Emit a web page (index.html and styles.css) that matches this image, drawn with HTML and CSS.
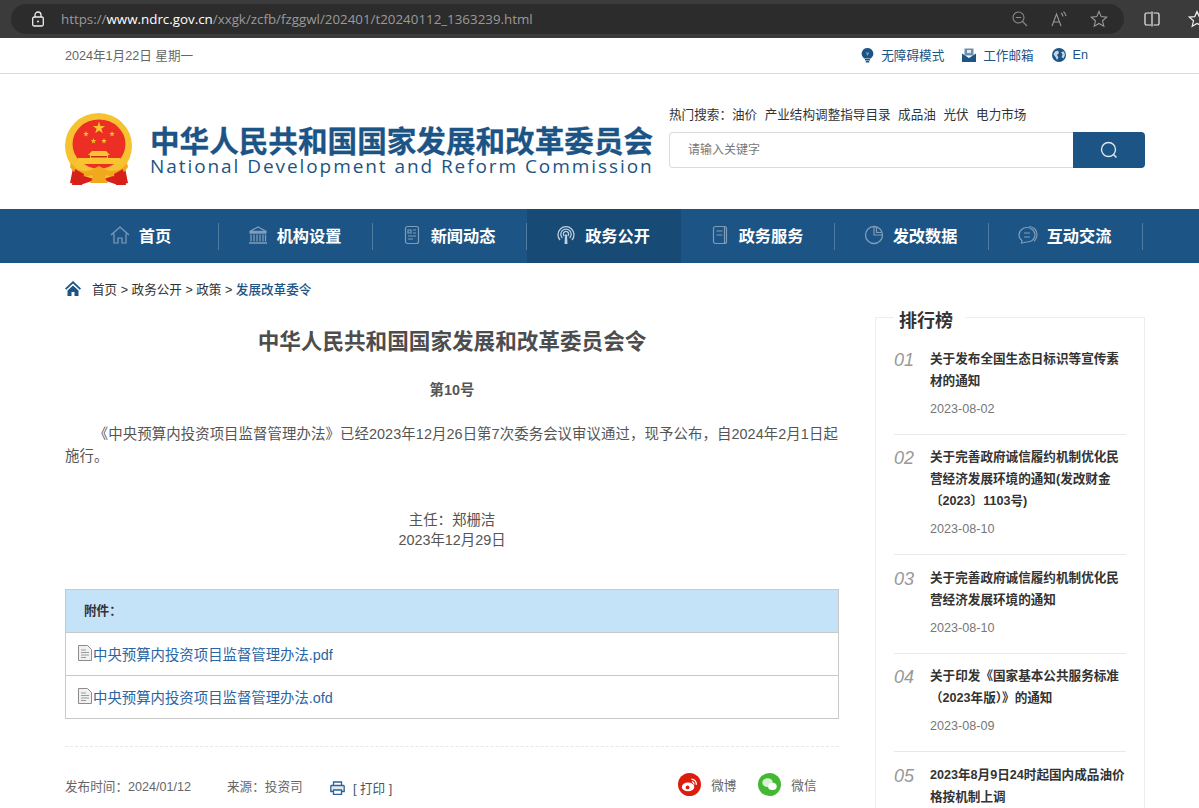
FILE: index.html
```html
<!DOCTYPE html>
<html lang="zh-CN">
<head>
<meta charset="utf-8">
<title>中华人民共和国国家发展和改革委员会令</title>
<link rel="stylesheet" href="styles.css">
</head>
<body>
<div class="chrome">
  <div class="address">
    <svg class="lock" viewBox="0 0 14 16" width="14" height="16"><path d="M4 6V4a3 3 0 0 1 6 0v2" fill="none" stroke="#eee" stroke-width="1.3"/><rect x="1.700" y="6" width="10.600" height="9" rx="1.500" fill="none" stroke="#eee" stroke-width="1.3"/><circle cx="7" cy="10.500" r="1" fill="#eee"/></svg>
    <div class="url"><span class="url-dim">https://</span><span class="url-host">www.ndrc.gov.cn</span><span class="url-dim">/xxgk/zcfb/fzggwl/202401/t20240112_1363239.html</span></div>
    <div class="address-tools">
      <svg viewBox="0 0 16 16" width="16" height="16"><circle cx="6.500" cy="6.500" r="5.500" fill="none" stroke="#8a8a8a" stroke-width="1.100"/><path d="M3.800 6.500h5.400M10.500 10.500l4.500 4.500" stroke="#8a8a8a" stroke-width="1.100" fill="none"/></svg>
      <svg viewBox="0 0 16 16" width="16" height="16"><path d="M1 15 5.500 3 10 15M2.800 11h5.400M10 2a5 5 0 0 1 2 3.500M12.500 .8a7 7 0 0 1 2.500 4.400" fill="none" stroke="#9a9a9a" stroke-width="1.100"/></svg>
      <svg viewBox="0 0 18 18" width="18" height="18"><path d="M9 1.500 11.200 6.600 16.700 7.100 12.500 10.800 13.800 16.200 9 13.400 4.200 16.200 5.500 10.800 1.300 7.100 6.800 6.600Z" fill="none" stroke="#9a9a9a" stroke-width="1.100"/></svg>
    </div>
  </div>
  <div class="chrome-tools">
    <svg viewBox="0 0 16 16" width="16" height="16"><path d="M7 2H2.500A1.500 1.500 0 0 0 1 3.500v9A1.500 1.500 0 0 0 2.500 14H7M9.500 2h4A1.500 1.500 0 0 1 15 3.500v9a1.500 1.500 0 0 1-1.500 1.500h-4M8 .5v15" fill="none" stroke="#eee" stroke-width="1.200"/></svg>
    <svg viewBox="0 0 18 18" width="18" height="18"><path d="M9 1.500 11.200 6.600 16.700 7.100 12.500 10.800 13.800 16.200 9 13.400 4.200 16.200 5.500 10.800 1.300 7.100 6.800 6.600Z" fill="none" stroke="#eee" stroke-width="1.200"/></svg>
  </div>
</div>

<div class="topbar">
  <div class="wrap topbar-in">
    <div class="today">2024年1月22日 星期一</div>
    <div class="top-links">
      <a class="top-link"><svg viewBox="0 0 13 16" width="13" height="16"><path d="M6.500 1a5.800 5.800 0 0 0-3.400 10.500h6.800A5.800 5.800 0 0 0 6.500 1Z" fill="#1c5485"/><path d="M4.700 5.500h3.600L6.500 9Z" fill="#7fa0bd"/><path d="M4 12.800h5M4.800 14.800h3.400" stroke="#1c5485" stroke-width="1.500"/></svg>无障碍模式</a>
      <a class="top-link"><svg viewBox="0 0 14 14" width="14" height="14"><rect x="2.500" y="0.500" width="9" height="7" fill="#6d8fad"/><rect x="5" y="2" width="4" height="3" fill="#dfe7ee"/><path d="M0 5.500 7 10 14 5.500V14H0Z" fill="#1c5485"/></svg>工作邮箱</a>
      <a class="top-link"><svg viewBox="0 0 14 14" width="14" height="14"><circle cx="7" cy="7" r="7" fill="#1c5485"/><path d="M3 3.500 6 2.500 7 5 5 7 6.500 9.500 5 12 3.500 9 1.500 6.500ZM9 4l3-.5 1 3.500-1.500 3.500L9.500 9 10.500 6.500Z" fill="#c5d5e2"/></svg>En</a>
    </div>
  </div>
</div>

<header class="wrap masthead">
  <div class="brand">
    <svg class="emblem" viewBox="0 0 68 73" width="68" height="73">
      <defs><path id="star" d="M0-1 .225-.309H.951L.363.118.588.809 0 .382-.588.809-.363.118-.951-.309H-.225Z"/></defs>
      <path d="M9 50 5 70l10 2 12-4h14l12 4 10-2-4-20Z" fill="#d8201b"/>
      <ellipse cx="33.500" cy="33" rx="33.500" ry="33" fill="#f6c232"/>
      <ellipse cx="34" cy="31" rx="26.500" ry="24.500" fill="#ec2e25"/>
      <g fill="#f8c42f">
        <use href="#star" transform="translate(34 15) scale(6.500)"/>
        <use href="#star" transform="translate(21 21) scale(3)"/>
        <use href="#star" transform="translate(47 21) scale(3)"/>
        <use href="#star" transform="translate(28.500 28) scale(3)"/>
        <use href="#star" transform="translate(39 28) scale(3)"/>
        <path d="M27 38h14l4 4H23ZM25 42h18v3H25ZM13 45h42l2 6H11Z"/>
      </g>
      <path d="M26 43h16v1.500H26Z" fill="#c9281f"/>
      <path d="M6 50c6 8 13 9 20 7l8-4 8 4c7 2 14 1 20-7l1 4c-6 9-14 11-22 8l-1 3 3 5H25l3-5-1-3c-8 3-16 1-22-8Z" fill="#f0a81c"/>
      <path d="M10 56l9 5-2 11H7ZM58 56l-9 5 2 11h10Z" fill="#d8201b"/>
    </svg>
    <div class="brand-text">
      <div class="brand-cn">中华人民共和国国家发展和改革委员会</div>
      <div class="brand-en">National Development and Reform Commission</div>
    </div>
  </div>
  <div class="search">
    <div class="hot"><span>热门搜索&#xFF1A;</span><a>油价</a><a>产业结构调整指导目录</a><a>成品油</a><a>光伏</a><a>电力市场</a></div>
    <div class="search-box">
      <div class="search-input">请输入关键字</div>
      <div class="search-btn"><svg viewBox="0 0 18 18" width="18" height="18"><circle cx="8.500" cy="8.500" r="7" fill="none" stroke="#dfe8ef" stroke-width="1.400"/><path d="M13.500 13.500l3 3" stroke="#dfe8ef" stroke-width="1.500"/></svg></div>
    </div>
  </div>
</header>

<nav class="nav">
  <div class="wrap nav-in">
    <a class="nav-item"><span class="nav-cell"><svg viewBox="0 0 20 20" width="20" height="20"><path d="M1 10 10 2l9 8M4 8.500V18h4v-5h4v5h4V8.500" fill="none" stroke="#7f9db8" stroke-width="1.200"/></svg>首页</span></a>
    <a class="nav-item"><span class="nav-cell"><svg viewBox="0 0 20 20" width="20" height="20"><path d="M1.500 6.500 10 2l8.500 4.500ZM1.500 8h17M3 9.500v7M6 9.500v7M9 9.500v7M12 9.500v7M15 9.500v7M17.500 9.500v7M1 18h18" fill="none" stroke="#7f9db8" stroke-width="1.300"/></svg>机构设置</span></a>
    <a class="nav-item"><span class="nav-cell"><svg viewBox="0 0 20 20" width="20" height="20"><rect x="3.500" y="1.500" width="13" height="17" rx="2" fill="none" stroke="#7f9db8" stroke-width="1.200"/><path d="M6 5h3v3H6ZM11 5h3M11 8h3M6 11h8M6 14h5" fill="none" stroke="#7f9db8" stroke-width="1.200"/></svg>新闻动态</span></a>
    <a class="nav-item is-active"><span class="nav-cell"><svg viewBox="0 0 20 20" width="20" height="20"><path d="M4 15a8 8 0 1 1 12 0M6.300 13a5.200 5.200 0 1 1 7.400 0M8.300 11a2.600 2.600 0 1 1 3.400 0" fill="none" stroke="#c0d0de" stroke-width="1.300"/><path d="M9 9.500h2l.5 9.500h-3Z" fill="#c0d0de"/></svg>政务公开</span></a>
    <a class="nav-item"><span class="nav-cell"><svg viewBox="0 0 20 20" width="20" height="20"><rect x="3.500" y="1.500" width="13" height="17" rx="2" fill="none" stroke="#7f9db8" stroke-width="1.200"/><path d="M6.500 6h6M6.500 10h6M14.500 2v16" fill="none" stroke="#7f9db8" stroke-width="1.200"/></svg>政务服务</span></a>
    <a class="nav-item"><span class="nav-cell"><svg viewBox="0 0 20 20" width="20" height="20"><circle cx="10" cy="10" r="8.500" fill="none" stroke="#7f9db8" stroke-width="1.300"/><path d="M10 1.500V10h8.500M12.500 2v5.500H18" fill="none" stroke="#7f9db8" stroke-width="1.200"/></svg>发改数据</span></a>
    <a class="nav-item"><span class="nav-cell"><svg viewBox="0 0 20 20" width="20" height="20"><path d="M9 2.500a8 7.500 0 0 1 8 7.500c0 4-3.500 7-8 7-1 0-2 0-3 .5L3.500 18l.5-2.500A7 7 0 0 1 1 10a8 7.500 0 0 1 8-7.500Z" fill="none" stroke="#7f9db8" stroke-width="1.200"/><path d="M11 1.500c5 0 8 4 8 8s-1.500 5.500-3 7M6 8h6M6 12h6" fill="none" stroke="#7f9db8" stroke-width="1.200"/></svg>互动交流</span></a>
  </div>
</nav>

<div class="wrap crumbs">
  <svg viewBox="0 0 16 16" width="16" height="16"><path d="M8 1 0 8.500l1.200 1.200L8 3.500l6.800 6.200L16 8.500Z" fill="#1c5485"/><path d="M2.500 10.500 8 5.500l5.500 5V16H9.500v-4h-3v4h-4Z" fill="#1c5485"/></svg>
  <div class="crumb-text">首页 &gt; 政务公开 &gt; 政策 &gt; <b>发展改革委令</b></div>
</div>

<main class="wrap content">
  <article class="article">
    <h1>中华人民共和国国家发展和改革委员会令</h1>
    <div class="doc-no">第10号</div>
    <p class="body-text">《中央预算内投资项目监督管理办法》已经2023年12月26日第7次委务会议审议通过&#xFF0C;现予公布&#xFF0C;自2024年2月1日起施行。</p>
    <div class="sign">
      <div>主任&#xFF1A;郑栅洁</div>
      <div>2023年12月29日</div>
    </div>
    <div class="attach">
      <div class="attach-head">附件&#xFF1A;</div>
      <a class="attach-row"><svg viewBox="0 0 14 16" width="14" height="16"><path d="M.5.500h9l4 4v11H.5Z" fill="#f1f1f1" stroke="#8c8c8c"/><path d="M3 5h5M3 7.500h8M3 10h8M3 12.500h5" stroke="#9a9a9a"/></svg>中央预算内投资项目监督管理办法.pdf</a>
      <a class="attach-row"><svg viewBox="0 0 14 16" width="14" height="16"><path d="M.5.500h9l4 4v11H.5Z" fill="#f1f1f1" stroke="#8c8c8c"/><path d="M3 5h5M3 7.500h8M3 10h8M3 12.500h5" stroke="#9a9a9a"/></svg>中央预算内投资项目监督管理办法.ofd</a>
    </div>
    <div class="meta">
      <span class="meta-date">发布时间&#xFF1A;2024/01/12</span>
      <span class="meta-src">来源&#xFF1A;投资司</span>
      <a class="meta-print"><svg viewBox="0 0 15 14" width="15" height="14"><path d="M3.500 4.500V1h8v3.500" fill="none" stroke="#2a6496" stroke-width="1.300"/><path d="M3.500 10.500H.8V5.200a.7.7 0 0 1 .7-.7h12a.7.7 0 0 1 .7.7v5.300h-2.700" fill="#e3ebf2" stroke="#2a6496" stroke-width="1.300"/><path d="M3.500 9h8v4.400h-8Z" fill="#fff" stroke="#2a6496" stroke-width="1.300"/></svg>[ 打印 ]</a>
      <span class="share">
        <a class="share-item"><svg viewBox="0 0 24 24" width="23" height="23"><circle cx="12" cy="12" r="12" fill="#dc1c0c"/><ellipse cx="10.500" cy="14.500" rx="6.500" ry="4.500" fill="#fff"/><circle cx="10" cy="15" r="2" fill="#dc1c0c"/><path d="M14 6.500a5 5 0 0 1 5 6M14.500 9a2.500 2.500 0 0 1 2 3" fill="none" stroke="#fff" stroke-width="1.300"/></svg>微博</a>
        <a class="share-item"><svg viewBox="0 0 24 24" width="23" height="23"><circle cx="12" cy="12" r="12" fill="#44b833"/><ellipse cx="10" cy="10" rx="5.500" ry="4.500" fill="#d9f2d5"/><ellipse cx="15" cy="14" rx="4.500" ry="3.700" fill="#fff"/></svg>微信</a>
      </span>
    </div>
  </article>

  <aside class="rank">
    <h2>排行榜</h2>
    <ul class="rank-list">
      <li class="rank-item"><span class="rank-no">01</span><div><a class="rank-title">关于发布全国生态日标识等宣传素材的通知</a><div class="rank-date">2023-08-02</div></div></li>
      <li class="rank-item"><span class="rank-no">02</span><div><a class="rank-title">关于完善政府诚信履约机制优化民营经济发展环境的通知(发改财金〔2023〕1103号)</a><div class="rank-date">2023-08-10</div></div></li>
      <li class="rank-item"><span class="rank-no">03</span><div><a class="rank-title">关于完善政府诚信履约机制优化民营经济发展环境的通知</a><div class="rank-date">2023-08-10</div></div></li>
      <li class="rank-item"><span class="rank-no">04</span><div><a class="rank-title">关于印发《国家基本公共服务标准&#xFF08;2023年版&#xFF09;》的通知</a><div class="rank-date">2023-08-09</div></div></li>
      <li class="rank-item"><span class="rank-no">05</span><div><a class="rank-title">2023年8月9日24时起国内成品油价格按机制上调</a></div></li>
    </ul>
  </aside>
</main>
</body>
</html>
```

FILE: styles.css
```css
* { box-sizing: border-box; }
html, body { height: 808px; overflow: hidden; }
body {
  margin: 0;
  background: #fff;
  color: #333;
  font-family: "Liberation Sans", "Noto Sans CJK SC", sans-serif;
  font-size: 12.600px;
}
a { color: inherit; text-decoration: none; }
svg { display: block; flex: none; }
.wrap { width: 1080px; margin-left: 65px; }

/* browser chrome */
.chrome { display: flex; align-items: center; height: 38px; padding-left: 11px; background: #3b3b3b; overflow: hidden; }
.address { display: flex; flex: none; align-items: center; width: 1113px; height: 30px; padding: 0 16px 0 20px; border-radius: 15px; background: #2c2c2c; }
.url { margin-left: 16px; font-family: "Open Sans", sans-serif; font-size: 13.350px; color: #9a9a9a; white-space: nowrap; }
.url-host { color: #fff; }
.address-tools { display: flex; align-items: center; gap: 23px; margin-left: auto; }
.chrome-tools { display: flex; flex: none; align-items: center; gap: 28px; margin-left: 20px; }

/* top strip */
.topbar { height: 36px; border-bottom: 1px solid #d5dde3; }
.topbar-in { display: flex; align-items: center; justify-content: space-between; height: 33px; }
.today { color: #666; }
.top-links { display: flex; gap: 18px; margin-right: 57px; color: #1c5485; }
.top-link { display: flex; align-items: center; gap: 7px; }

/* masthead */
.masthead { display: flex; justify-content: space-between; height: 135px; }
.brand { display: flex; align-items: flex-start; padding-top: 39px; }
.brand-text { margin-left: 17px; padding-top: 16px; color: #1c5485; }
.brand-cn { font-size: 29.600px; line-height: 26px; font-weight: 700; white-space: nowrap; -webkit-text-stroke: 0.3px #1c5485; }
.brand-en { font-family: "Open Sans", sans-serif; font-size: 19px; line-height: 22px; letter-spacing: 1.930px; white-space: nowrap; }
.search { width: 476px; padding-top: 32px; }
.hot { display: flex; gap: 7.500px; height: 26px; line-height: 18px; color: #333; }
.hot span { margin-right: -7.500px; }
.search-box { display: flex; height: 36px; }
.search-input { flex: 1; padding-left: 18px; line-height: 34px; border: 1px solid #dcdcdc; border-right: 0; border-radius: 4px 0 0 4px; font-size: 12px; color: #777; }
.search-btn { display: flex; align-items: center; justify-content: center; width: 72px; background: #1c5485; border-radius: 0 4px 4px 0; }

/* nav */
.nav { height: 54px; background: #1c5485; }
.nav-in { display: flex; height: 54px; }
.nav-item { display: flex; align-items: center; width: 154px; color: #fff; font-size: 16.200px; font-weight: 700; }
.nav-cell { display: flex; align-items: center; justify-content: center; gap: 9px; width: 100%; height: 27px; padding: 0 2px 2px 0; border-right: 1px solid #4f7ba1; }
.is-active { background: #184a76; }
.is-active .nav-cell { border-right: 0; }

/* breadcrumb */
.crumbs { display: flex; align-items: center; gap: 11px; height: 50px; }
.crumb-text { color: #333; }
.crumb-text b { color: #1c5485; font-weight: 500; }

/* content */
.content { display: flex; justify-content: space-between; align-items: flex-start; }
.article { width: 774px; }
.article h1 { margin: 14px 0 0; text-align: center; font-size: 21.600px; line-height: 30px; font-weight: 700; color: #4d4d4d; }
.doc-no { margin-top: 23px; text-align: center; font-size: 14.400px; font-weight: 700; line-height: 20px; color: #555; }
.body-text { margin: 23px 0 0; text-indent: 28.800px; font-size: 14.400px; line-height: 22px; letter-spacing: 0.090px; color: #555; }
.sign { margin-top: 43px; text-align: center; font-size: 14.400px; line-height: 20px; color: #555; }
.attach { margin-top: 39px; border: 1px solid #c9c9c9; }
.attach-head { height: 43px; padding-left: 18px; line-height: 42px; font-weight: 700; background: #c5e3f8; color: #333; border-bottom: 1px solid #c9c9c9; }
.attach-row { display: flex; align-items: center; gap: 1px; height: 42px; padding: 0 0 2px 12px; font-size: 14.400px; color: #2a66a3; }
.attach-row + .attach-row { height: 43px; border-top: 1px solid #c9c9c9; }
.meta { display: flex; align-items: center; margin-top: 27px; padding-top: 26px; border-top: 1px dashed #e8e8e8; color: #666; }
.meta-date { width: 162px; }
.meta-src { width: 103px; }
.meta-print { display: flex; align-items: center; gap: 8px; margin-top: 4px; color: #44576a; }
.share { display: flex; gap: 22px; margin: 0 22.500px 2px auto; }
.share-item { display: flex; align-items: center; gap: 10px; }

/* rank */
.rank { width: 270px; height: 600px; margin-top: 4px; padding: 0 18px; border: 1px solid #eee; }
.rank h2 { width: fit-content; margin: -11px 0 0 0; padding: 0 12px 0 5px; font-size: 18px; line-height: 28px; font-weight: 700; color: #333; background: #fff; }
.rank-list { list-style: none; margin: 0; padding: 0; }
.rank-item { display: flex; gap: 16px; padding: 11.500px 0 14px; border-bottom: 1px solid #e8e8e8; }
.rank-item:first-child { padding: 13px 0 13.500px; }
.rank-no { flex: none; width: 20px; padding-top: 1px; font-size: 18px; line-height: 22px; font-style: italic; color: #999; }
.rank-title { display: block; font-weight: 700; line-height: 22px; color: #333; }
.rank-date { margin-top: 6px; line-height: 22px; color: #777; }
```
